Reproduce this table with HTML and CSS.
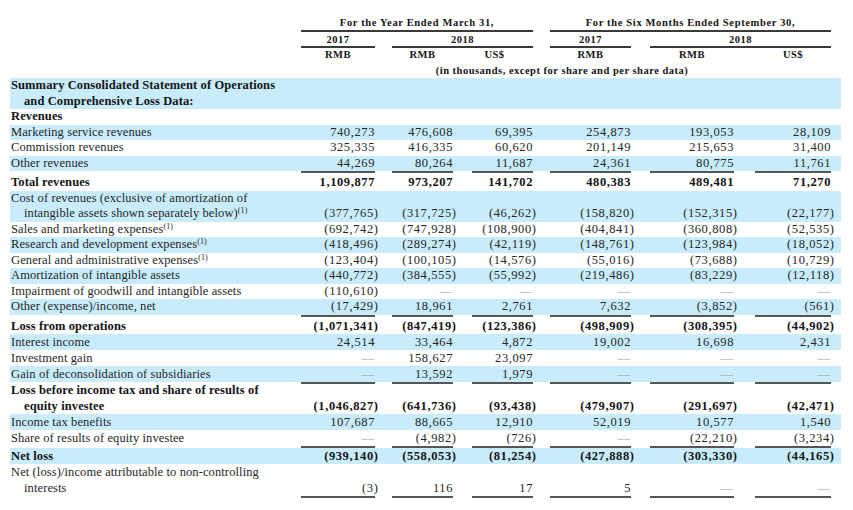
FILE: index.html
```html
<!DOCTYPE html>
<html>
<head>
<meta charset="utf-8">
<link rel="stylesheet" href="styles.css">
</head>
<body>
<table class="fin">
<colgroup>
<col class="c-lb"><col class="c1"><col class="cs17"><col class="c2"><col class="cs19"><col class="c3"><col class="cs17"><col class="c4"><col class="cs19"><col class="c5"><col class="cs21"><col class="c6"><col class="cend">
</colgroup>
<thead>
<tr class="h1"><th></th><th colspan="5" class="hu">For the Year Ended March 31,</th><th></th><th colspan="5" class="hu">For the Six Months Ended September 30,</th><th></th></tr>
<tr class="h2"><th></th><th class="hu">2017</th><th></th><th colspan="3" class="hu">2018</th><th></th><th class="hu">2017</th><th></th><th colspan="3" class="hu">2018</th><th></th></tr>
<tr class="h3"><th></th><th>RMB</th><th></th><th>RMB</th><th></th><th class="usd">US$</th><th></th><th>RMB</th><th></th><th>RMB</th><th></th><th>US$</th><th></th></tr>
<tr class="h4"><th></th><th colspan="11" class="note">(in thousands, except for share and per share data)</th><th></th></tr>
</thead>
<tbody>
<tr class="b bold"><td class="lb">Summary Consolidated Statement of Operations<br>and Comprehensive Loss Data:</td><td></td><td></td><td></td><td></td><td></td><td></td><td></td><td></td><td></td><td></td><td></td><td></td></tr>
<tr class="bold"><td class="lb">Revenues</td><td></td><td></td><td></td><td></td><td></td><td></td><td></td><td></td><td></td><td></td><td></td><td></td></tr>
<tr class="b"><td class="lb">Marketing service revenues</td><td class="n">740,273</td><td></td><td class="n">476,608</td><td></td><td class="n">69,395</td><td></td><td class="n">254,873</td><td></td><td class="n">193,053</td><td></td><td class="n">28,109</td><td></td></tr>
<tr><td class="lb">Commission revenues</td><td class="n">325,335</td><td></td><td class="n">416,335</td><td></td><td class="n">60,620</td><td></td><td class="n">201,149</td><td></td><td class="n">215,653</td><td></td><td class="n">31,400</td><td></td></tr>
<tr class="b"><td class="lb">Other revenues</td><td class="n">44,269</td><td></td><td class="n">80,264</td><td></td><td class="n">11,687</td><td></td><td class="n">24,361</td><td></td><td class="n">80,775</td><td></td><td class="n">11,761</td><td></td></tr>
<tr class="bold tt"><td class="lb">Total revenues</td><td class="n">1,109,877</td><td></td><td class="n">973,207</td><td></td><td class="n">141,702</td><td></td><td class="n">480,383</td><td></td><td class="n">489,481</td><td></td><td class="n">71,270</td><td></td></tr>
<tr class="b"><td class="lb">Cost of revenues (exclusive of amortization of<br>intangible assets shown separately below)<sup>(1)</sup></td><td class="n"><span class="ng">(377,765)</span></td><td></td><td class="n"><span class="ng">(317,725)</span></td><td></td><td class="n"><span class="ng">(46,262)</span></td><td></td><td class="n"><span class="ng">(158,820)</span></td><td></td><td class="n"><span class="ng">(152,315)</span></td><td></td><td class="n"><span class="ng">(22,177)</span></td><td></td></tr>
<tr><td class="lb">Sales and marketing expenses<sup>(1)</sup></td><td class="n"><span class="ng">(692,742)</span></td><td></td><td class="n"><span class="ng">(747,928)</span></td><td></td><td class="n"><span class="ng">(108,900)</span></td><td></td><td class="n"><span class="ng">(404,841)</span></td><td></td><td class="n"><span class="ng">(360,808)</span></td><td></td><td class="n"><span class="ng">(52,535)</span></td><td></td></tr>
<tr class="b"><td class="lb">Research and development expenses<sup>(1)</sup></td><td class="n"><span class="ng">(418,496)</span></td><td></td><td class="n"><span class="ng">(289,274)</span></td><td></td><td class="n"><span class="ng">(42,119)</span></td><td></td><td class="n"><span class="ng">(148,761)</span></td><td></td><td class="n"><span class="ng">(123,984)</span></td><td></td><td class="n"><span class="ng">(18,052)</span></td><td></td></tr>
<tr><td class="lb">General and administrative expenses<sup>(1)</sup></td><td class="n"><span class="ng">(123,404)</span></td><td></td><td class="n"><span class="ng">(100,105)</span></td><td></td><td class="n"><span class="ng">(14,576)</span></td><td></td><td class="n"><span class="ng">(55,016)</span></td><td></td><td class="n"><span class="ng">(73,688)</span></td><td></td><td class="n"><span class="ng">(10,729)</span></td><td></td></tr>
<tr class="b"><td class="lb">Amortization of intangible assets</td><td class="n"><span class="ng">(440,772)</span></td><td></td><td class="n"><span class="ng">(384,555)</span></td><td></td><td class="n"><span class="ng">(55,992)</span></td><td></td><td class="n"><span class="ng">(219,486)</span></td><td></td><td class="n"><span class="ng">(83,229)</span></td><td></td><td class="n"><span class="ng">(12,118)</span></td><td></td></tr>
<tr><td class="lb">Impairment of goodwill and intangible assets</td><td class="n"><span class="ng">(110,610)</span></td><td></td><td class="n"><span class="d">—</span></td><td></td><td class="n"><span class="d">—</span></td><td></td><td class="n"><span class="d">—</span></td><td></td><td class="n"><span class="d">—</span></td><td></td><td class="n"><span class="d">—</span></td><td></td></tr>
<tr class="b"><td class="lb">Other (expense)/income, net</td><td class="n"><span class="ng">(17,429)</span></td><td></td><td class="n">18,961</td><td></td><td class="n">2,761</td><td></td><td class="n">7,632</td><td></td><td class="n"><span class="ng">(3,852)</span></td><td></td><td class="n"><span class="ng">(561)</span></td><td></td></tr>
<tr class="bold tt"><td class="lb">Loss from operations</td><td class="n"><span class="ng">(1,071,341)</span></td><td></td><td class="n"><span class="ng">(847,419)</span></td><td></td><td class="n"><span class="ng">(123,386)</span></td><td></td><td class="n"><span class="ng">(498,909)</span></td><td></td><td class="n"><span class="ng">(308,395)</span></td><td></td><td class="n"><span class="ng">(44,902)</span></td><td></td></tr>
<tr class="b tall"><td class="lb">Interest income</td><td class="n">24,514</td><td></td><td class="n">33,464</td><td></td><td class="n">4,872</td><td></td><td class="n">19,002</td><td></td><td class="n">16,698</td><td></td><td class="n">2,431</td><td></td></tr>
<tr class="tall"><td class="lb">Investment gain</td><td class="n"><span class="d">—</span></td><td></td><td class="n">158,627</td><td></td><td class="n">23,097</td><td></td><td class="n"><span class="d">—</span></td><td></td><td class="n"><span class="d">—</span></td><td></td><td class="n"><span class="d">—</span></td><td></td></tr>
<tr class="b tall"><td class="lb">Gain of deconsolidation of subsidiaries</td><td class="n"><span class="d">—</span></td><td></td><td class="n">13,592</td><td></td><td class="n">1,979</td><td></td><td class="n"><span class="d">—</span></td><td></td><td class="n"><span class="d">—</span></td><td></td><td class="n"><span class="d">—</span></td><td></td></tr>
<tr class="bold tt tall gap"><td class="lb">Loss before income tax and share of results of<br>equity investee</td><td class="n"><span class="ng">(1,046,827)</span></td><td></td><td class="n"><span class="ng">(641,736)</span></td><td></td><td class="n"><span class="ng">(93,438)</span></td><td></td><td class="n"><span class="ng">(479,907)</span></td><td></td><td class="n"><span class="ng">(291,697)</span></td><td></td><td class="n"><span class="ng">(42,471)</span></td><td></td></tr>
<tr class="b tall"><td class="lb">Income tax benefits</td><td class="n">107,687</td><td></td><td class="n">88,665</td><td></td><td class="n">12,910</td><td></td><td class="n">52,019</td><td></td><td class="n">10,577</td><td></td><td class="n">1,540</td><td></td></tr>
<tr class="ub tall"><td class="lb">Share of results of equity investee</td><td class="n"><span class="d">—</span></td><td></td><td class="n"><span class="ng">(4,982)</span></td><td></td><td class="n"><span class="ng">(726)</span></td><td></td><td class="n"><span class="d">—</span></td><td></td><td class="n"><span class="ng">(22,210)</span></td><td></td><td class="n"><span class="ng">(3,234)</span></td><td></td></tr>
<tr class="b bold tall"><td class="lb">Net loss</td><td class="n"><span class="ng">(939,140)</span></td><td></td><td class="n"><span class="ng">(558,053)</span></td><td></td><td class="n"><span class="ng">(81,254)</span></td><td></td><td class="n"><span class="ng">(427,888)</span></td><td></td><td class="n"><span class="ng">(303,330)</span></td><td></td><td class="n"><span class="ng">(44,165)</span></td><td></td></tr>
<tr class="ub tall last"><td class="lb">Net (loss)/income attributable to non-controlling<br>interests</td><td class="n"><span class="ng">(3)</span></td><td></td><td class="n">116</td><td></td><td class="n">17</td><td></td><td class="n">5</td><td></td><td class="n"><span class="d">—</span></td><td></td><td class="n"><span class="d">—</span></td><td></td></tr>
</tbody>
</table>
</body>
</html>
```
FILE: styles.css
```css
body {
  margin: 0;
  background: #ffffff;
  font-family: "Liberation Serif", "Times New Roman", serif;
  color: #262626;
}

.fin {
  margin: 15px 0 0 10px;
  width: 831px;
  table-layout: fixed;
  border-collapse: separate;
  border-spacing: 0;
  font-size: 12.5px;
}

.c-lb { width: 291px; }
.c1 { width: 74px; }
.c2 { width: 61px; }
.c3 { width: 61px; }
.c4 { width: 81px; }
.c5 { width: 84px; }
.c6 { width: 76px; }
.cs17 { width: 17px; }
.cs19 { width: 19px; }
.cs21 { width: 21px; }
.cend { width: 10px; }

.fin th,
.fin td {
  padding: 0;
  white-space: nowrap;
}

.fin th {
  font-size: 10.5px;
  font-weight: bold;
  letter-spacing: 0.5px;
  text-align: center;
  color: #151515;
  vertical-align: bottom;
}

.fin .h1 th { line-height: 15px; letter-spacing: 0.65px; }
.fin .h2 th { line-height: 13px; padding-top: 1px; }
.fin .h3 th { line-height: 14px; }
.fin .h4 th { line-height: 14px; padding-top: 2px; }

.fin th.hu { border-bottom: 2px solid #3a3a3a; }
.fin th.usd { padding-right: 16px; }
.fin th.note { padding-right: 8px; }

.fin td {
  line-height: 15.5px;
  vertical-align: bottom;
}

.fin .tall td { line-height: 16px; }

.b td { background: #c8ecfb; }

.fin td.lb {
  padding-left: 14px;
  text-indent: -13px;
  letter-spacing: 0.1px;
}

.bold td { font-weight: bold; color: #141414; }

.fin td.n {
  text-align: right;
  padding-right: 0;
  letter-spacing: 0.6px;
}

.ng { margin-right: -3.5px; }

.d {
  color: #9a9a9a;
  letter-spacing: 0;
  padding-right: 1px;
}

sup {
  font-size: 8px;
  line-height: 0;
  vertical-align: 4px;
}

.fin .tt td.n {
  border-top: 2px solid #555555;
  padding-top: 2px;
}

.fin .gap td.n { padding-top: 3px; }

.fin .ub td.n {
  border-bottom: 2px solid #555555;
}

.fin .ub td.lb {
  padding-bottom: 2px;
}

.fin .last td.n { padding-top: 1px; }
```
